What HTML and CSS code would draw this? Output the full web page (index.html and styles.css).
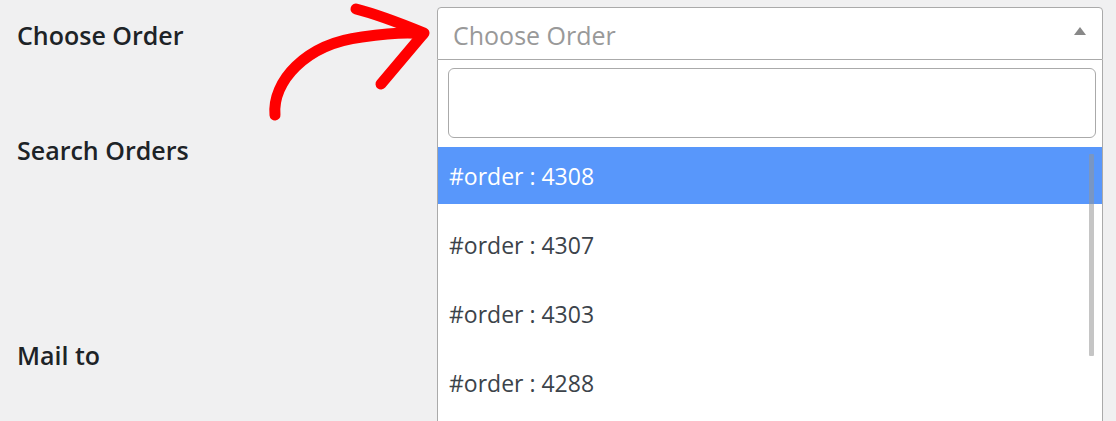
FILE: index.html
```html
<!DOCTYPE html>
<html>
<head>
<meta charset="utf-8">
<link rel="stylesheet" href="styles.css">
</head>
<body>
<div class="page">
  <div class="labels">
    <div class="label l1">Choose Order</div>
    <div class="label l2">Search Orders</div>
    <div class="label l3">Mail to</div>
  </div>
  <div class="field">
    <div class="select">
      <span class="placeholder">Choose Order</span>
      <span class="caret"></span>
    </div>
    <div class="dropdown">
      <div class="search"></div>
      <ul class="results">
        <li class="item active">#order : 4308</li>
        <li class="item">#order : 4307</li>
        <li class="item">#order : 4303</li>
        <li class="item">#order : 4288</li>
      </ul>
      <div class="scrollbar"></div>
    </div>
  </div>
</div>
<svg class="arrow" width="1116" height="421" viewBox="0 0 1116 421">
  <path d="M275 115 C 272 82, 305 44, 362 37 C 390 33, 410 32, 423 34" fill="none" stroke="#ff0000" stroke-width="11" stroke-linecap="round" stroke-linejoin="round"/>
  <path d="M356 9 C 380 15, 402 24, 424 33 L 381 84" fill="none" stroke="#ff0000" stroke-width="11" stroke-linecap="round" stroke-linejoin="round"/>
</svg>
</body>
</html>
```
FILE: styles.css
```css
html, body {
  margin: 0;
  padding: 0;
  height: 421px;
  overflow: hidden;
}
body {
  background: #f0f0f1;
  font-family: "Open Sans", "Noto Sans", sans-serif;
  position: relative;
}
.page {
  display: flex;
  padding-left: 17px;
  height: 421px;
  box-sizing: border-box;
  overflow: hidden;
}
.labels {
  width: 420px;
  display: flex;
  flex-direction: column;
}
.label {
  font-size: 25px;
  font-weight: 600;
  color: #1d2327;
  line-height: 30px;
}
.l1 { margin-top: 20px; }
.l2 { margin-top: 85px; }
.l3 { margin-top: 175px; }
.field {
  width: 666px;
  margin-top: 7px;
  display: flex;
  flex-direction: column;
}
.select {
  height: 51px;
  flex: none;
  border: 1px solid #aaa;
  border-radius: 4px 4px 0 0;
  background: #fff;
  display: flex;
  align-items: center;
  justify-content: space-between;
  padding: 0 16px 0 15px;
}
.placeholder {
  font-size: 25px;
  color: #999;
  margin-top: 3px;
}
.caret {
  width: 0;
  height: 0;
  border-left: 6px solid transparent;
  border-right: 6px solid transparent;
  border-bottom: 8px solid #888;
  margin-top: -6px;
}
.dropdown {
  position: relative;
  flex: 1;
  min-height: 0;
  overflow: hidden;
  background: #fff;
  border: 1px solid #aaa;
  border-top: none;
  border-bottom: none;
}
.search {
  margin: 8px 6px 0 10px;
  height: 68px;
  border: 1px solid #aaa;
  border-radius: 6px;
}
.results {
  list-style: none;
  margin: 9px 0 0;
  padding: 0;
  display: flex;
  flex-direction: column;
  gap: 12px;
}
.item {
  height: 57px;
  flex: none;
  display: flex;
  align-items: center;
  padding-left: 11px;
  font-size: 23px;
  color: #3c434a;
  padding-top: 1px;
  box-sizing: border-box;
}
.item.active {
  background: #5897fb;
  color: #fff;
}
.scrollbar {
  position: absolute;
  left: 651px;
  top: 94px;
  width: 5px;
  height: 202px;
  background: rgba(150, 150, 150, 0.55);
  border-radius: 1px;
}
.arrow {
  position: absolute;
  left: 0;
  top: 0;
  pointer-events: none;
}
```
